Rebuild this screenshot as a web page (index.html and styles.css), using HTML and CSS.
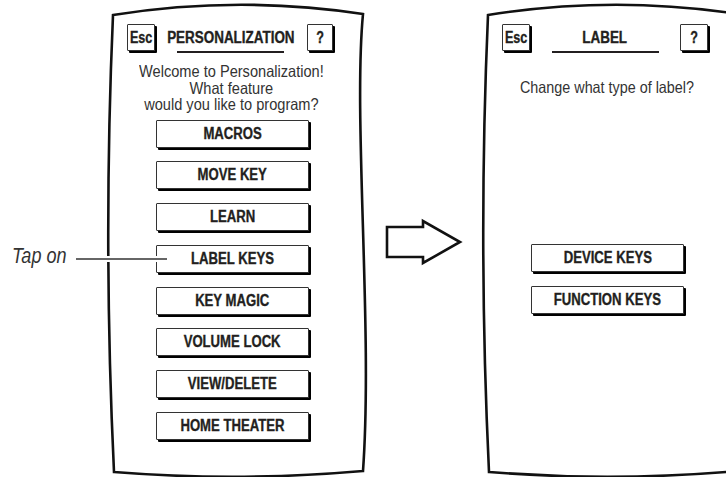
FILE: index.html
```html
<!DOCTYPE html>
<html lang="en">
<head>
    <meta charset="UTF-8">
    <title>Personalization - Label Keys</title>
    <link rel="stylesheet" href="styles.css">
</head>
<body>
    <div class="screen">
        <svg class="outline" viewBox="0 0 268 477" width="268" height="477">
            <path d="M10,15 Q135,-5 260,14 C250,120 270,330 260,471 Q135,482 11,472 Q0,243 10,15 Z"/>
        </svg>
        <div class="content">
            <div class="header">
                <div class="key small"><span class="txt esc">Esc</span></div>
                <div class="title">
                    <span class="txt">PERSONALIZATION</span>
                    <div class="rule"></div>
                </div>
                <div class="key small"><span class="txt esc">?</span></div>
            </div>
            <div class="intro"><span class="txt">Welcome to Personalization!<br>What feature<br>would you like to program?</span></div>
            <div class="menu">
                <div class="key wide"><span class="txt">MACROS</span></div>
                <div class="key wide"><span class="txt">MOVE KEY</span></div>
                <div class="key wide"><span class="txt">LEARN</span></div>
                <div class="key wide"><span class="txt">LABEL KEYS</span></div>
                <div class="key wide"><span class="txt">KEY MAGIC</span></div>
                <div class="key wide"><span class="txt">VOLUME LOCK</span></div>
                <div class="key wide"><span class="txt">VIEW/DELETE</span></div>
                <div class="key wide"><span class="txt">HOME THEATER</span></div>
            </div>
        </div>
        <div class="callout">
            <span class="txt">Tap on</span>
            <div class="leader"></div>
        </div>
    </div>

    <svg class="arrow" viewBox="0 0 82 50" width="82" height="50">
        <polygon points="4,10 40,10 40,4 77,25 40,46 40,40 4,40"/>
    </svg>

    <div class="screen">
        <svg class="outline" viewBox="0 0 268 477" width="268" height="477">
            <path d="M10,15 Q135,-5 260,14 C250,120 270,330 260,471 Q135,482 11,472 Q0,243 10,15 Z"/>
        </svg>
        <div class="content">
            <div class="header">
                <div class="key small"><span class="txt esc">Esc</span></div>
                <div class="title">
                    <span class="txt">LABEL</span>
                    <div class="rule"></div>
                </div>
                <div class="key small"><span class="txt esc">?</span></div>
            </div>
            <div class="intro single"><span class="txt">Change what type of label?</span></div>
            <div class="menu lower">
                <div class="key wide"><span class="txt">DEVICE KEYS</span></div>
                <div class="key wide"><span class="txt">FUNCTION KEYS</span></div>
            </div>
        </div>
    </div>
</body>
</html>
```

FILE: styles.css
```css
html, body {
    margin: 0;
    height: 477px;
    overflow: hidden;
    background: #fff;
}

body {
    display: flex;
    align-items: flex-start;
    padding-left: 103px;
    font-family: "Liberation Sans", Arial, sans-serif;
    color: #231f20;
}

/* condensed look: squeeze the glyphs, layout keeps the unscaled box */
.txt {
    display: inline-block;
    white-space: nowrap;
    transform: scaleX(0.82);
}

.screen {
    position: relative;
    flex-shrink: 0;
    width: 268px;
    height: 477px;
}

.outline {
    position: absolute;
    left: 0;
    top: 0;
    overflow: visible;
}

.outline path {
    fill: none;
    stroke: #111;
    stroke-width: 2.6;
}

.content {
    position: relative;
    width: 206px;
    padding: 24px 0 0 24px;
}

.header {
    display: flex;
    justify-content: space-between;
    align-items: flex-start;
}

.key {
    box-sizing: border-box;
    display: flex;
    justify-content: center;
    align-items: center;
    background: #fff;
    border: 1.5px solid #333;
    border-radius: 1px;
    box-shadow: 2px 2px 0 #000;
    font-weight: bold;
    font-size: 16px;
    -webkit-text-stroke: 0.35px #231f20;
}

.key.small {
    width: 28px;
    height: 27px;
    font-size: 17px;
}

.txt.esc {
    transform: scaleX(0.74);
}

.key.wide {
    width: 153px;
    height: 28px;
}

.title {
    flex: 0 0 110px;
    display: flex;
    flex-direction: column;
    align-items: center;
    margin-top: 4.8px;
    font-weight: bold;
    font-size: 16px;
    -webkit-text-stroke: 0.35px #231f20;
}

.title .txt {
    transform: scaleX(0.84);
}

.rule {
    width: 107px;
    height: 2.5px;
    margin-top: 4px;
    background: #231f20;
}

.intro {
    display: flex;
    flex-direction: column;
    align-items: center;
    margin: 10px 0 0 3px;
    font-size: 16.5px;
    line-height: 16.5px;
    text-align: center;
    color: #333;
}

.intro .txt {
    transform: scaleX(0.885);
}

.intro.single {
    margin-top: 26px;
}

.intro.single .txt {
    transform: scaleX(0.87);
}

.menu {
    display: flex;
    flex-direction: column;
    gap: 13.75px;
    margin-top: 6.8px;
    padding-left: 29px;
}

.menu.lower {
    margin-top: 148px;
}

.callout {
    position: absolute;
    left: -91px;
    top: 242.7px;
    display: flex;
    align-items: flex-start;
    font-size: 22px;
    font-style: italic;
    color: #333;
}

.callout .txt {
    width: 56px;
    transform-origin: left center;
}

.leader {
    width: 91px;
    height: 1.5px;
    margin: 15.5px 0 0 8px;
    background: #666;
    box-shadow: 0 0 0 2px #fff;
}

.arrow {
    flex-shrink: 0;
    margin: 217px 13px 0 12px;
}

.arrow polygon {
    fill: #fff;
    stroke: #111;
    stroke-width: 2.6;
}
```
